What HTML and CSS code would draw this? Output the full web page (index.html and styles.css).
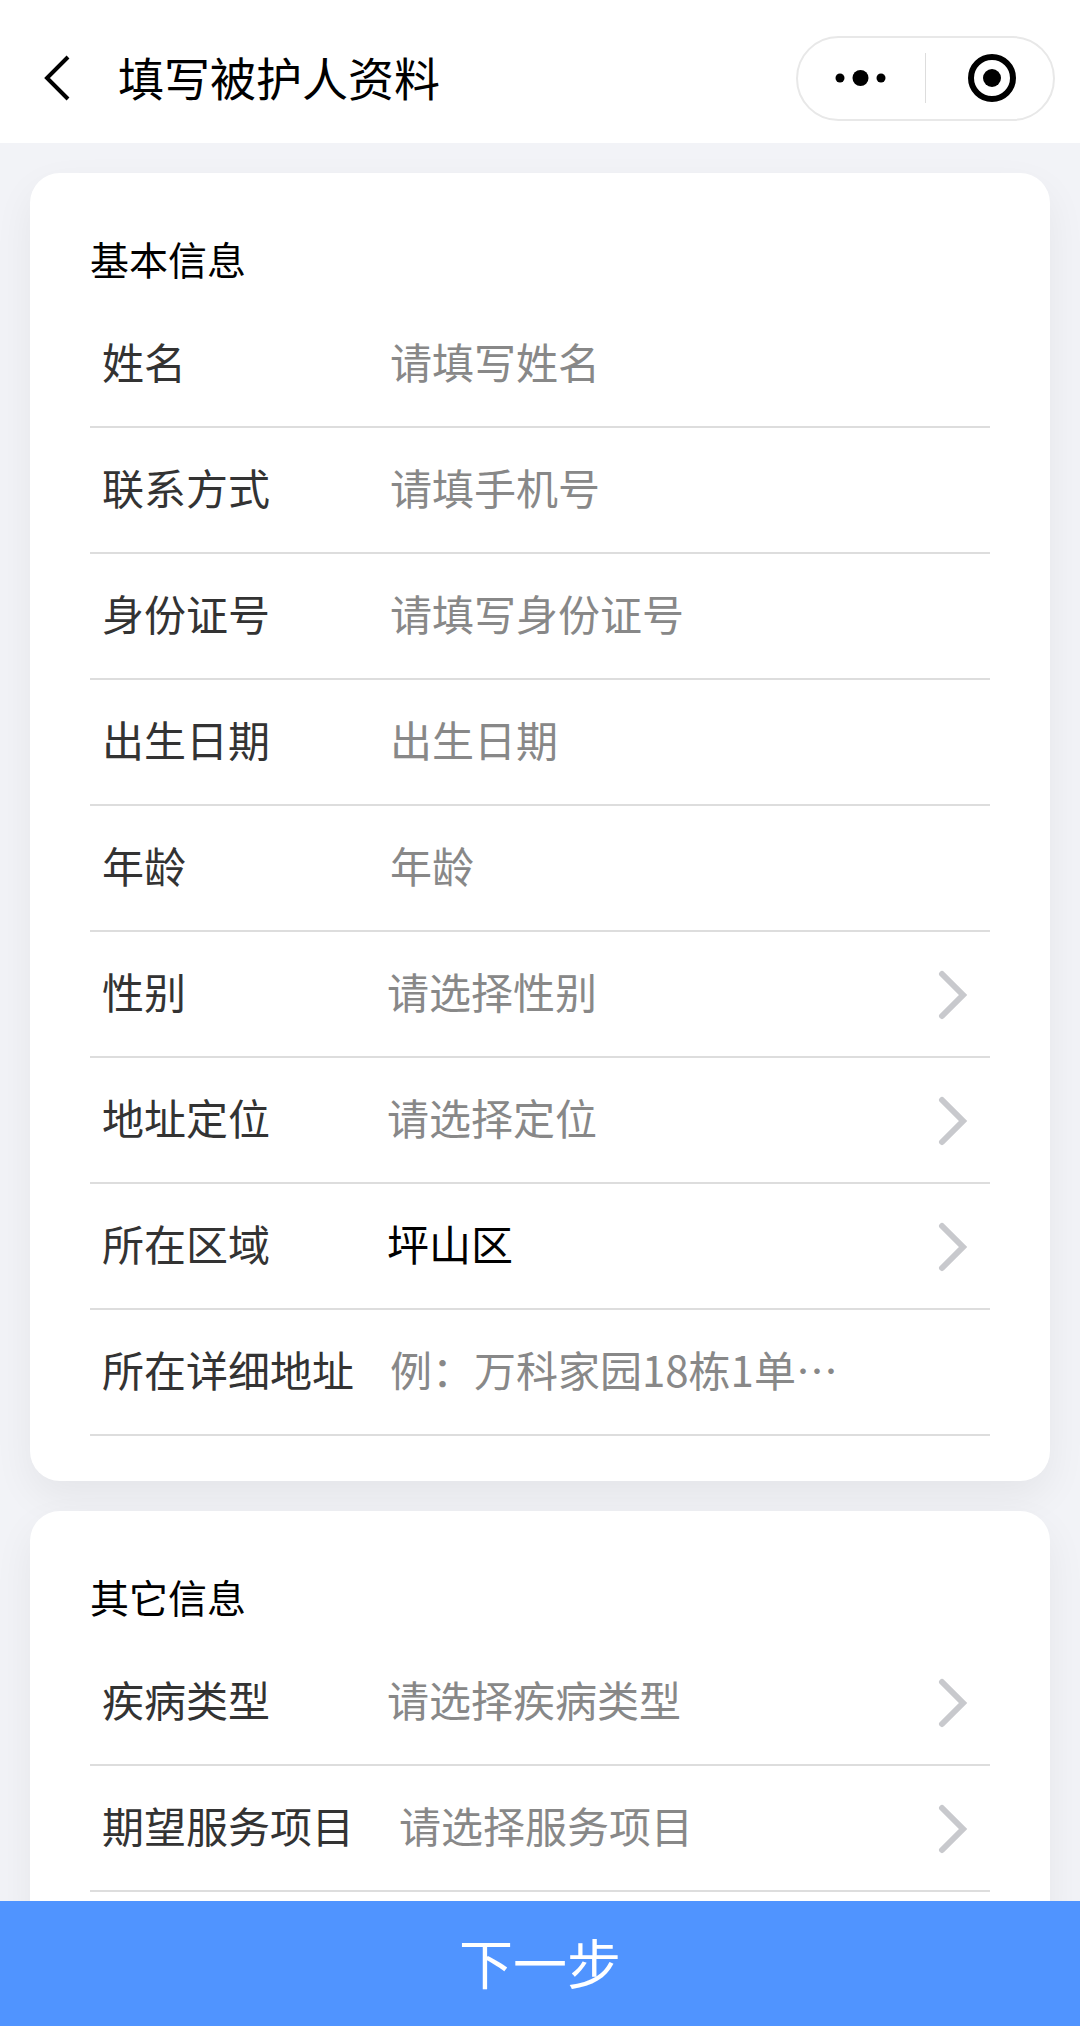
FILE: index.html
```html
<!DOCTYPE html>
<html lang="zh-CN">
<head>
    <meta charset="UTF-8">
    <meta name="viewport" content="width=device-width, initial-scale=1.0">
    <title>填写被护人资料</title>
    <link rel="stylesheet" href="styles.css">
</head>
<body>
    <div class="page">
        <div class="navbar">
            <svg class="back-icon" width="28" height="48" viewBox="0 0 28 48">
                <path d="M25 3 L4 24 L25 45" fill="none" stroke="#000" stroke-width="4"/>
            </svg>
            <div class="nav-title">填写被护人资料</div>
            <div class="capsule">
                <div class="capsule-part capsule-more">
                    <svg width="52" height="18" viewBox="0 0 52 18">
                        <circle cx="5" cy="9" r="4.5"/>
                        <circle cx="25.5" cy="9" r="8"/>
                        <circle cx="46" cy="9" r="4.5"/>
                    </svg>
                </div>
                <div class="capsule-line"></div>
                <div class="capsule-part capsule-close">
                    <svg width="48" height="48" viewBox="0 0 48 48">
                        <circle cx="24" cy="24" r="21" fill="none" stroke="#000" stroke-width="6"/>
                        <circle cx="24" cy="24" r="9"/>
                    </svg>
                </div>
            </div>
        </div>

        <div class="content">
            <div class="card">
                <div class="card-title">基本信息</div>
                <div class="row">
                    <div class="label">姓名</div>
                    <div class="value placeholder">请填写姓名</div>
                </div>
                <div class="row">
                    <div class="label">联系方式</div>
                    <div class="value placeholder">请填手机号</div>
                </div>
                <div class="row">
                    <div class="label">身份证号</div>
                    <div class="value placeholder">请填写身份证号</div>
                </div>
                <div class="row">
                    <div class="label">出生日期</div>
                    <div class="value placeholder">出生日期</div>
                </div>
                <div class="row">
                    <div class="label">年龄</div>
                    <div class="value placeholder">年龄</div>
                </div>
                <div class="row row-picker">
                    <div class="label">性别</div>
                    <div class="value placeholder">请选择性别</div>
                    <svg class="arrow" width="30" height="50" viewBox="0 0 30 50"><path d="M4 4 L25 25 L4 46" /></svg>
                </div>
                <div class="row row-picker">
                    <div class="label">地址定位</div>
                    <div class="value placeholder">请选择定位</div>
                    <svg class="arrow" width="30" height="50" viewBox="0 0 30 50"><path d="M4 4 L25 25 L4 46" /></svg>
                </div>
                <div class="row row-picker">
                    <div class="label">所在区域</div>
                    <div class="value">坪山区</div>
                    <svg class="arrow" width="30" height="50" viewBox="0 0 30 50"><path d="M4 4 L25 25 L4 46" /></svg>
                </div>
                <div class="row">
                    <div class="label">所在详细地址</div>
                    <div class="value placeholder">例：万科家园18栋1单⋯</div>
                </div>
            </div>

            <div class="card">
                <div class="card-title">其它信息</div>
                <div class="row row-picker">
                    <div class="label">疾病类型</div>
                    <div class="value placeholder">请选择疾病类型</div>
                    <svg class="arrow" width="30" height="50" viewBox="0 0 30 50"><path d="M4 4 L25 25 L4 46" /></svg>
                </div>
                <div class="row row-picker">
                    <div class="label label-wide">期望服务项目</div>
                    <div class="value placeholder">请选择服务项目</div>
                    <svg class="arrow" width="30" height="50" viewBox="0 0 30 50"><path d="M4 4 L25 25 L4 46" /></svg>
                </div>
            </div>
        </div>

        <div class="next-button">下一步</div>
    </div>
</body>
</html>
```

FILE: styles.css
```css
* {
    box-sizing: border-box;
}

body {
    margin: 0;
    font-family: "Noto Sans CJK SC", "Noto Sans", sans-serif;
    background-color: #f2f3f7;
}

.page {
    display: flex;
    flex-direction: column;
    height: 100vh;
    overflow: hidden;
}

.navbar {
    flex: none;
    display: flex;
    align-items: center;
    height: 143px;
    padding: 13px 25px 0 43px;
    background-color: #fff;
}

.back-icon {
    flex: none;
    margin-right: 47px;
}

.nav-title {
    flex: 1;
    padding-bottom: 4px;
    font-size: 46px;
    color: #000;
}

.capsule {
    flex: none;
    display: flex;
    align-items: center;
    width: 259px;
    height: 85px;
    border: 2px solid #e8e8e8;
    border-radius: 43px;
}

.capsule-part {
    display: flex;
    align-items: center;
    justify-content: center;
}

.capsule-more {
    width: 127px;
    padding-right: 2px;
}

.capsule-line {
    width: 1px;
    height: 50px;
    background-color: #ddd;
}

.capsule-close {
    flex: 1;
    padding-left: 5px;
}

.content {
    flex: 1;
    min-height: 0;
    overflow: hidden;
    padding: 30px 30px 0;
}

.card {
    padding: 62px 60px 45px;
    margin-bottom: 30px;
    background-color: #fff;
    border-radius: 30px;
    box-shadow: 0 16px 40px rgba(0, 0, 0, 0.06);
}

.card-title {
    height: 50px;
    margin-bottom: 17px;
    font-size: 39px;
    line-height: 46px;
    color: #000;
}

.row {
    display: flex;
    align-items: center;
    height: 126px;
    padding: 0 22px 0 12px;
    border-bottom: 2px solid #ddd;
}

.label {
    flex: none;
    width: 288px;
    padding-bottom: 8px;
    font-size: 42px;
    color: #333;
}

.row-picker .label {
    width: 285px;
}

.row-picker .label-wide {
    width: 297px;
}

.value {
    flex: 1;
    min-width: 0;
    padding-bottom: 8px;
    font-size: 42px;
    color: #000;
}

.placeholder {
    color: #888;
}

.arrow {
    flex: none;
    margin-top: 2px;
    fill: none;
    stroke: #c8c9cd;
    stroke-width: 6px;
    stroke-linecap: round;
    filter: blur(0.5px);
}

.next-button {
    flex: none;
    height: 125px;
    font-size: 54px;
    line-height: 122px;
    text-align: center;
    color: #fff;
    background-color: #5094ff;
}
```
